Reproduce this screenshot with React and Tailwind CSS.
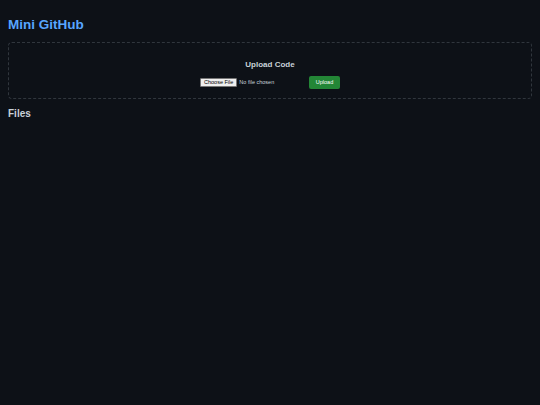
export default function App() {
  return (
    <div className="min-h-[405px] bg-[#0d1117] px-2 pt-[15px] text-[#c9d1d9] font-['Liberation_Sans',Arial,sans-serif]">
      <h1 className="text-[13.5px] font-bold leading-[20px] text-[#58a6ff]">Mini GitHub</h1>
      <div className="mt-[7px] flex h-[57px] flex-col items-center rounded-[4px] border border-dashed border-[#30363d] pt-[16px]">
        <h2 className="text-[8px] font-bold leading-[11px]">Upload Code</h2>
        <div className="mt-[6px] flex items-center">
          <div className="flex w-[105px] items-center">
            <span className="rounded-[1px] border border-[#767676] bg-[#efefef] px-[3px] text-[5.5px] leading-[7px] text-black">Choose File</span>
            <span className="ml-[2px] text-[5.5px] leading-[7px] text-[#c9d1d9]">No file chosen</span>
          </div>
          <button className="ml-[4px] h-[13px] w-[31px] rounded-[2px] bg-[#238636] text-[5.5px] leading-[13px] text-white">Upload</button>
        </div>
      </div>
      <h2 className="mt-[8px] text-[10px] font-bold leading-[13px]">Files</h2>
    </div>
  );
}
